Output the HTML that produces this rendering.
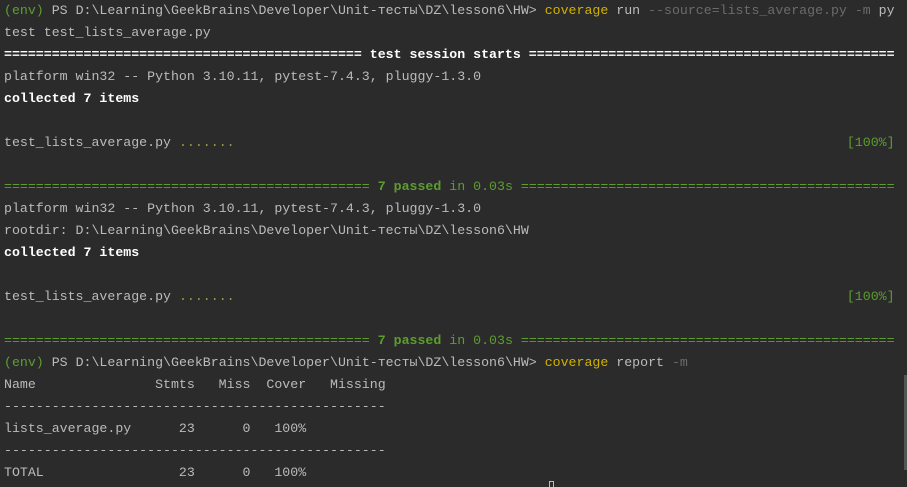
<!DOCTYPE html>
<html><head><meta charset="utf-8"><style>
html,body{margin:0;padding:0;background:#2b2b2b;width:907px;height:487px;overflow:hidden}
pre{margin:0;padding:0 0 0 4px;font-family:"Liberation Mono","DejaVu Sans Mono",monospace;font-size:13.25px;line-height:22px;color:#bbbbbb;white-space:pre;position:relative;top:0}
.g{color:#5c9e2e}.y{color:#d1b000}.d{color:#6b6b6b}.b{font-weight:bold;color:#ffffff}.gb{font-weight:bold;color:#5c9e2e}.o{color:#a39a3c}
.sb{position:absolute;left:904px;top:375px;width:3px;height:95px;background:#555}
.cur{position:absolute;left:549px;top:481px;width:5px;height:6px;border:1px solid #bbb;border-bottom:none;box-sizing:border-box}
</style></head><body>
<pre><span class="g">(env)</span> PS D:\Learning\GeekBrains\Developer\Unit-тесты\DZ\lesson6\HW&gt; <span class="y">coverage</span> run <span class="d">--source=lists_average.py -m</span> py
test test_lists_average.py
<span class="b">============================================= test session starts ==============================================</span>
platform win32 -- Python 3.10.11, pytest-7.4.3, pluggy-1.3.0
<span class="b">collected 7 items</span>

test_lists_average.py <span class="o">.......</span>                                                                             <span class="g">[100%]</span>

<span class="g">============================================== <span class="gb">7 passed</span> in 0.03s ===============================================</span>
platform win32 -- Python 3.10.11, pytest-7.4.3, pluggy-1.3.0
rootdir: D:\Learning\GeekBrains\Developer\Unit-тесты\DZ\lesson6\HW
<span class="b">collected 7 items</span>

test_lists_average.py <span class="o">.......</span>                                                                             <span class="g">[100%]</span>

<span class="g">============================================== <span class="gb">7 passed</span> in 0.03s ===============================================</span>
<span class="g">(env)</span> PS D:\Learning\GeekBrains\Developer\Unit-тесты\DZ\lesson6\HW&gt; <span class="y">coverage</span> report <span class="d">-m</span>
Name               Stmts   Miss  Cover   Missing
------------------------------------------------
lists_average.py      23      0   100%
------------------------------------------------
TOTAL                 23      0   100%</pre>
<div class="sb"></div><div class="cur"></div>
</body></html>
